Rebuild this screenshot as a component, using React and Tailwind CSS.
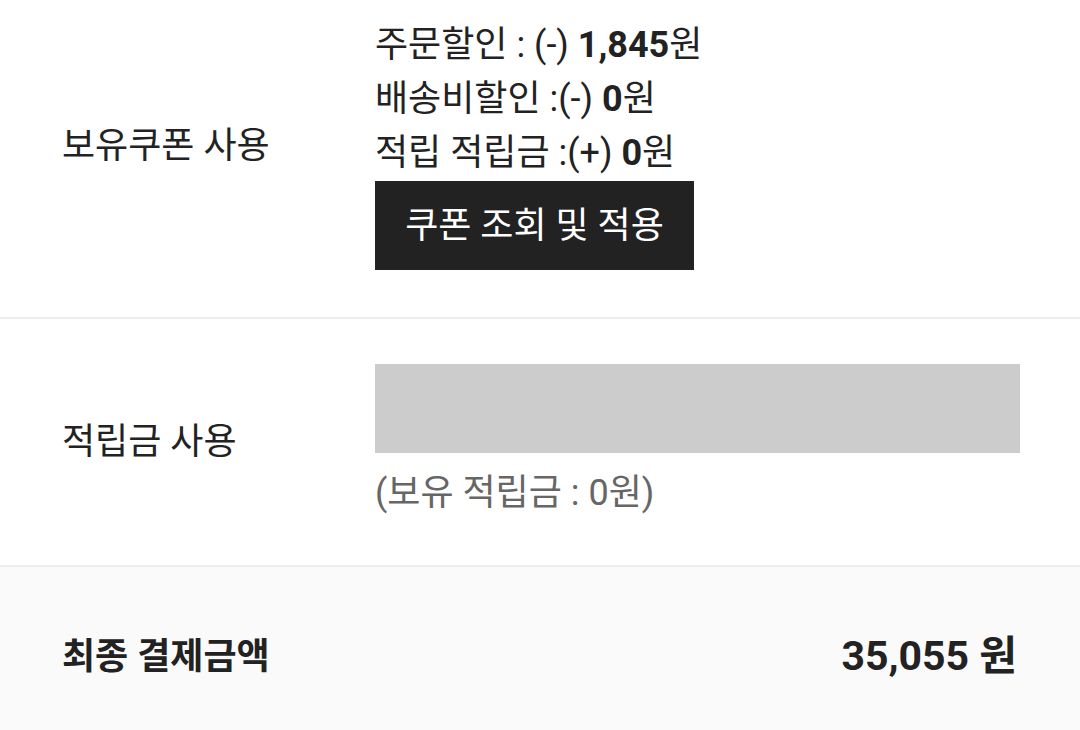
const font = { fontFamily: "Roboto, 'Noto Sans CJK KR', sans-serif" };

const App = () => {
  return (
    <div className="min-h-screen bg-white text-[#222222]" style={font}>
      {/* Coupon */}
      <section className="flex items-center pt-[18px] pb-[47px] border-b-2 border-[#eeeeee]">
        <div className="w-[375px] pl-[62px] pt-[4px] text-[36px] leading-[54px]">보유쿠폰 사용</div>
        <div className="flex flex-col items-start">
          <p className="text-[36px] leading-[54px]">
            주문할인 : (-) <b className="font-bold">1,845</b>원
          </p>
          <p className="text-[36px] leading-[54px]">
            배송비할인 :(-) <b className="font-bold">0</b>원
          </p>
          <p className="text-[36px] leading-[54px]">
            적립 적립금 :(+) <b className="font-bold">0</b>원
          </p>
          <button className="mt-[1px] h-[89px] w-[319px] bg-[#222222] text-white text-[36px]">
            쿠폰 조회 및 적용
          </button>
        </div>
      </section>

      {/* Points */}
      <section className="flex items-center pt-[45px] pb-[45px] border-b-2 border-[#eeeeee]">
        <div className="w-[375px] pl-[62px] text-[36px] leading-[54px]">적립금 사용</div>
        <div className="flex-1 pr-[60px]">
          <div className="h-[89px] bg-[#cccccc]"></div>
          <p className="mt-[13px] text-[36px] leading-[54px] text-[#666666]">(보유 적립금 : 0원)</p>
        </div>
      </section>

      {/* Total */}
      <section className="flex items-center justify-between bg-[#fafafa] pl-[62px] pr-[63px] h-[180px]">
        <span className="text-[36px] font-bold">최종 결제금액</span>
        <span className="text-[41px] font-bold">35,055 원</span>
      </section>
    </div>
  );
};

export default App;
